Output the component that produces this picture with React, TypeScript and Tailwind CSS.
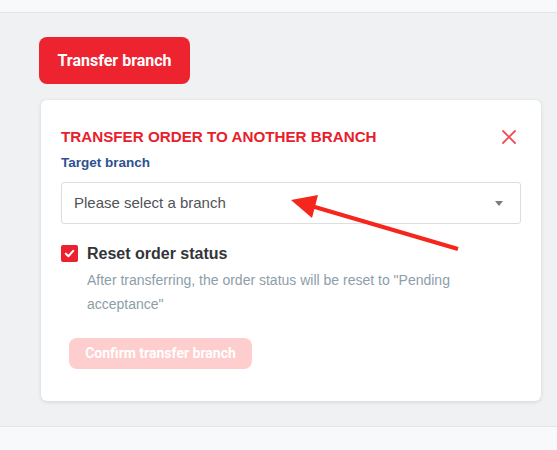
import React, { useState } from 'react';

const CheckIcon = () => (
  <svg viewBox="0 0 12 12" className="w-[11px] h-[11px]" fill="none">
    <path d="M2 6.2 L4.8 9 L10 3.2" stroke="white" strokeWidth="2.2" strokeLinecap="round" strokeLinejoin="round" />
  </svg>
);

const CloseIcon = () => (
  <svg viewBox="0 0 14 14" className="w-[14px] h-[14px]" fill="none">
    <path d="M1 1 L13 13 M13 1 L1 13" stroke="#f04e55" strokeWidth="1.8" strokeLinecap="round" />
  </svg>
);

const App: React.FC = () => {
  const [reset, setReset] = useState(true);

  return (
    <div className="relative w-[557px] h-[450px] flex flex-col bg-[#f0f1f3] overflow-hidden" style={{ fontFamily: '"Liberation Sans", Arial, sans-serif' }}>
      {/* top strip */}
      <div className="h-[13px] bg-[#f8f9fb] border-b border-[#e3e5e8] shrink-0" />

      <main className="h-[413px] shrink-0 pt-[24px]">
        <button
          className="ml-[39px] w-[151px] h-[47px] rounded-[8px] bg-[#ee2330] text-white text-[16px] font-bold"
          style={{ fontFamily: 'Roboto, "Liberation Sans", sans-serif' }}
        >
          Transfer branch
        </button>

        {/* transfer card */}
        <section className="ml-[41px] mt-[16px] w-[500px] h-[301px] bg-white rounded-[6px] shadow-[0_1px_4px_rgba(0,0,0,0.12)] pl-[20px] pr-[20px] pt-[27px]">
          <div className="flex items-center justify-between h-[20px]">
            <h2 className="text-[15.2px] leading-[20px] font-bold text-[#e8202c] uppercase">
              Transfer order to another branch
            </h2>
            <button className="mr-[5px] -mt-[1px]">
              <CloseIcon />
            </button>
          </div>

          <label className="block mt-[7px] text-[13.5px] leading-[18px] font-bold text-[#2d5190]">
            Target branch
          </label>

          <div className="mt-[10px] h-[42px] border border-[#dcdde0] rounded-[3px] flex items-center justify-between pl-[12px] pr-[17px]">
            <span className="text-[15px] text-[#505358]">Please select a branch</span>
            <span className="w-0 h-0 border-l-[4px] border-r-[4px] border-t-[5px] border-l-transparent border-r-transparent border-t-[#7b7b7b]" />
          </div>

          <div className="mt-[20px] flex items-start gap-[9px]">
            <button
              onClick={() => setReset(!reset)}
              className="mt-[1px] w-[17px] h-[17px] rounded-[2px] bg-[#ec2130] flex items-center justify-center shrink-0"
            >
              {reset && <CheckIcon />}
            </button>
            <div>
              <div className="text-[16px] leading-[20px] font-bold text-[#333538]">Reset order status</div>
              <p className="mt-[4px] text-[14px] leading-[24px] text-[#8d9ea9]">
                After transferring, the order status will be reset to "Pending acceptance"
              </p>
            </div>
          </div>

          <button
            className="mt-[22px] ml-[8px] w-[183px] h-[31px] rounded-[8px] bg-[#fecdcd] text-white text-[14px] font-bold"
            style={{ fontFamily: 'Roboto, "Liberation Sans", sans-serif' }}
          >
            Confirm transfer branch
          </button>
        </section>
      </main>

      {/* bottom strip */}
      <div className="flex-1 bg-[#f8f9fb] border-t border-[#e3e5e8]" />

      {/* annotation arrow */}
      <svg className="absolute left-0 top-0 pointer-events-none" width="557" height="450" viewBox="0 0 557 450">
        <line x1="458" y1="249" x2="308" y2="205" stroke="#f5271c" strokeWidth="4" />
        <polygon points="291,200 318,195 312,218" fill="#f5271c" />
      </svg>
    </div>
  );
};

export default App;
